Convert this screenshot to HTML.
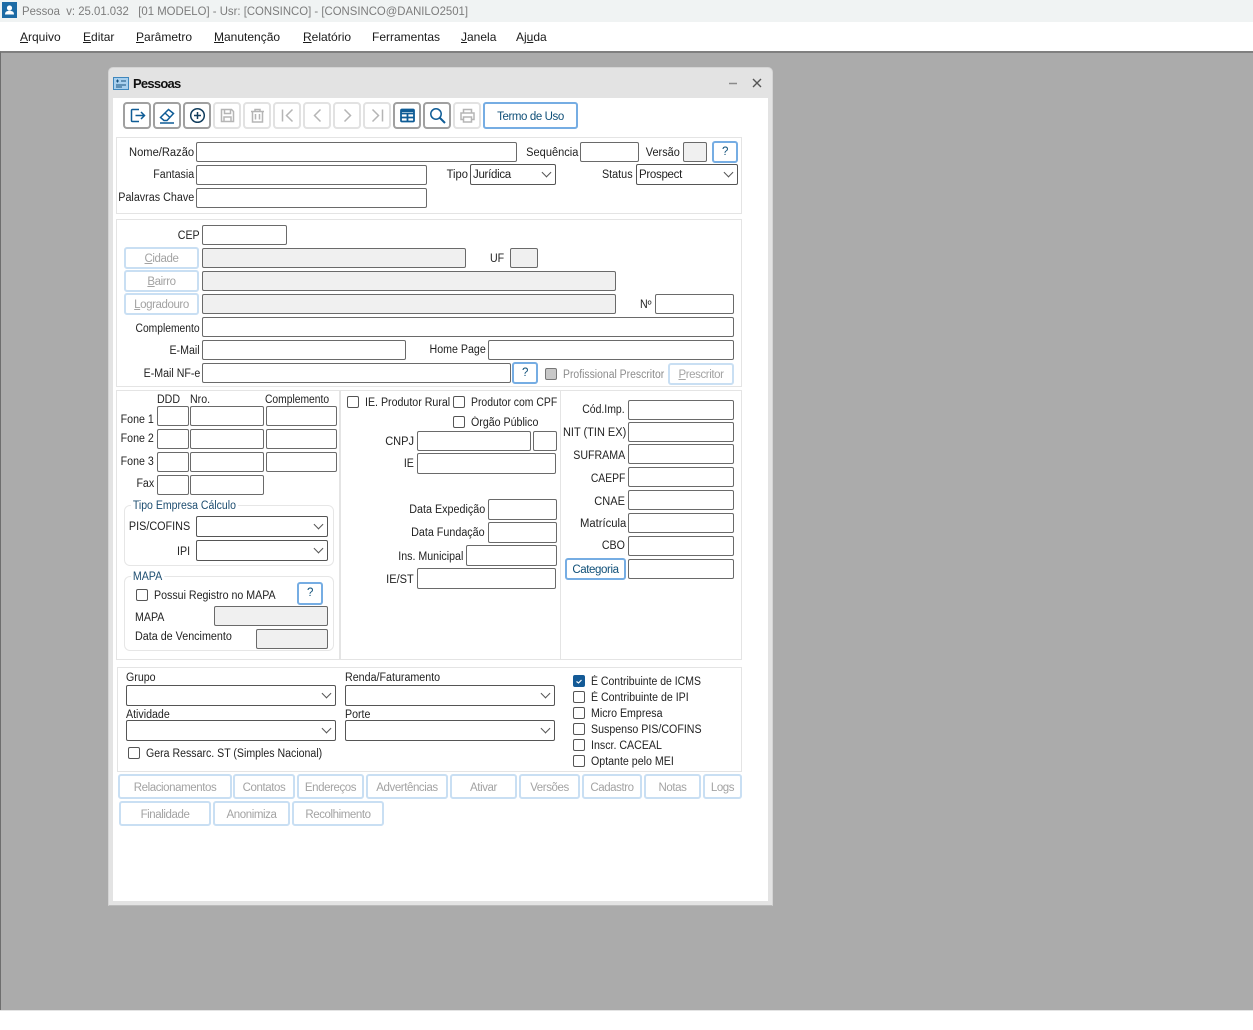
<!DOCTYPE html>
<html><head><meta charset="utf-8"><title>Pessoa</title>
<style>
html,body{margin:0;padding:0;width:1253px;height:1030px;overflow:hidden;background:#fff;font-family:"Liberation Sans",sans-serif;font-size:11.5px;color:#222}
div,span,svg{position:absolute;box-sizing:border-box}
u{text-decoration:underline}
.t{white-space:nowrap;line-height:14px;height:14px;margin-top:1px;transform:scaleX(.925);transform-origin:left center}
.r{white-space:nowrap;line-height:14px;height:14px;margin-top:1px;text-align:right;transform:scaleX(.925);transform-origin:right center}
.i{background:#fff;border:1px solid #6a6a6a;border-radius:2px;height:20px}
.d{background:#f0f0f0}
.s{background:#fff;border:1px solid #555;border-radius:2px;height:21px;line-height:20px;padding-left:2px;color:#222;letter-spacing:-.3px}
.s:after{content:"";position:absolute;right:5px;top:4px;width:6px;height:6px;border-right:1.5px solid #555;border-bottom:1.5px solid #555;transform:rotate(45deg)}
.g{border:1px solid #e4e4e4;background:#fff}
.fs{border:1px solid #e6e6e6;border-radius:6px;background:#fff}
.b{border:2px solid #c9dff3;border-radius:3px;background:#fff;color:#a3a3a3;text-align:center;line-height:24px;white-space:nowrap;letter-spacing:-.42px}
.q{border:2px solid #76ade3;border-radius:3px;background:#fff;color:#0f4f78;text-align:center;line-height:18px;letter-spacing:-.4px}
.c{width:12px;height:12px;border:1px solid #555;border-radius:2px;background:#fff}
.tb{width:28px;height:27px;border:2px solid #a0a0a0;border-radius:4px;background:#fff;top:102px}
.off{border-color:#e2e2e2}
.tb svg{left:2.500px;top:2px;width:19px;height:19px;fill:none;stroke:#0f5c96;stroke-width:1.5}
.off svg{stroke:#b5b5b5}
.m{top:29.500px;color:#1a1a1a;font-size:12px;line-height:14px;white-space:nowrap}
</style></head><body>

<div style="left:0;top:0;width:1253px;height:22px;background:#f0f3f3"></div>
<div style="left:2px;top:2px;width:15px;height:16px;background:#1d6ba5"></div>
<svg style="left:2px;top:2px" width="15" height="16"><circle cx="7.500" cy="6" r="2.600" fill="#fff"/><path d="M3 12.500c0-3 2-3.600 4.500-3.600s4.500.6 4.500 3.600z" fill="#fff"/></svg>
<div class="t" style="left:22px;top:4px;margin-top:0;color:#7c7c7c;font-size:12px;transform:scaleX(.947)">Pessoa&nbsp;&nbsp;v: 25.01.032&nbsp;&nbsp;&nbsp;[01 MODELO] - Usr: [CONSINCO] - [CONSINCO@DANILO2501]</div>
<div style="left:0;top:22px;width:1253px;height:29px;background:#fff"></div>
<div class="m" style="left:20px"><u>A</u>rquivo</div>
<div class="m" style="left:83px"><u>E</u>ditar</div>
<div class="m" style="left:136px"><u>P</u>arâmetro</div>
<div class="m" style="left:214px"><u>M</u>anutenção</div>
<div class="m" style="left:303px"><u>R</u>elatório</div>
<div class="m" style="left:372px">Ferramentas</div>
<div class="m" style="left:461px"><u>J</u>anela</div>
<div class="m" style="left:516px">Aj<u>u</u>da</div>

<div style="left:0;top:51px;width:1253px;height:959px;background:#ababab;border-top:2px solid #7f7f7f;border-left:1px solid #6e6e6e"></div>
<div style="left:0;top:1010px;width:1253px;height:1px;background:#e4e4e4"></div>

<div style="left:108px;top:67px;width:665px;height:839px;background:#e3e3e3;border-radius:5px 5px 0 0;border:1px solid #d4d4d4;border-bottom:1px solid #bbb"></div>
<div style="left:113px;top:98px;width:655px;height:803px;background:#fff"></div>
<svg style="left:113px;top:76px" width="17" height="15"><rect x=".5" y="1.500" width="15" height="12" fill="#a9d0ee" stroke="#3f87bd"/><path d="M3 5h3M4.500 3.500v3M8 5h5M3 9h10M3 11h6" stroke="#17527f" fill="none"/></svg>
<div class="t" style="left:133px;top:76px;font-weight:bold;font-size:13px;color:#111;transform:none;letter-spacing:-.75px">Pessoas</div>
<svg style="left:726px;top:76px" width="40" height="14"><path d="M3 7.500h8" stroke="#8a8a8a" stroke-width="1.500"/><path d="M27 3l8 8M35 3l-8 8" stroke="#555" stroke-width="1.400"/></svg>

<div class="tb" style="left:123px"><svg viewBox="0 0 19 19"><path d="M11 3.500H4.500a1 1 0 0 0-1 1v10a1 1 0 0 0 1 1H11M7.500 9.500h9M13 6l3.500 3.500L13 13"/></svg></div>
<div class="tb" style="left:153px"><svg viewBox="0 0 19 19"><path d="M2.500 11.500 10.500 3.500 15.500 7.500 9 14.500H6zM7 7l5 4.500M2 17h14"/></svg></div>
<div class="tb" style="left:183px"><svg viewBox="0 0 19 19" style="stroke:#123e5e"><circle cx="9.500" cy="9.500" r="6.800"/><path d="M9.500 6v7M6 9.500h7"/></svg></div>
<div class="tb off" style="left:213px"><svg viewBox="0 0 19 19"><path d="M3.500 3.500h10l2 2v10h-12zM6.500 3.500v4h6v-4M6 15.500v-4.500h7v4.500"/></svg></div>
<div class="tb off" style="left:243px"><svg viewBox="0 0 19 19"><path d="M3 5.500h13M7 5.500v-2h5v2M4.500 5.500v10.500h10v-10.500M7.500 8v5.500M11.500 8v5.500"/></svg></div>
<div class="tb off" style="left:273px"><svg viewBox="0 0 19 19"><path d="M4.500 3.500v12M14.500 3.500l-6 6 6 6"/></svg></div>
<div class="tb off" style="left:303px"><svg viewBox="0 0 19 19"><path d="M12.500 3.500l-6 6 6 6"/></svg></div>
<div class="tb off" style="left:333px"><svg viewBox="0 0 19 19"><path d="M6.500 3.500l6 6-6 6"/></svg></div>
<div class="tb off" style="left:363px"><svg viewBox="0 0 19 19"><path d="M14.500 3.500v12M4.500 3.500l6 6-6 6"/></svg></div>
<div class="tb" style="left:393px"><svg viewBox="0 0 19 19" style="stroke-width:1.800"><rect x="3" y="3.500" width="13" height="12" rx="1"/><path d="M3 7.500h13M3 11.500h13M9.500 7.500v8"/><path d="M3 4.800h13" stroke-width="2.500"/></svg></div>
<div class="tb" style="left:423px"><svg viewBox="0 0 19 19"><circle cx="8" cy="8" r="5.200"/><path d="M12 12l5 5" stroke-width="2"/></svg></div>
<div class="tb off" style="left:453px"><svg viewBox="0 0 19 19"><path d="M5.500 7V3.500h8V7M5 13.500H3v-6.500h13v6.500h-2M5.500 11h8v5h-8z"/></svg></div>
<div class="q" style="left:483px;top:102px;width:95px;height:27px;line-height:26px">Termo de Uso</div>

<!-- section 1 -->
<div class="g" style="left:116px;top:137px;width:626px;height:77px"></div>
<div class="r" style="right:1059px;top:145px;transform:scaleX(.97)">Nome/Razão</div>
<div class="i" style="left:196px;top:142px;width:321px"></div>
<div class="r" style="right:675px;top:145px;transform:scaleX(.96)">Sequência</div>
<div class="r" style="right:573px;top:145px;transform:scaleX(.95)" >Versão</div>
<div class="i" style="left:580px;top:142px;width:59px"></div>
<div class="i d" style="left:683px;top:142px;width:24px"></div>
<div class="q" style="left:712px;top:141px;width:26px;height:22px">?</div>
<div class="r" style="right:1059px;top:167px">Fantasia</div>
<div class="i" style="left:196px;top:165px;width:231px"></div>
<div class="r" style="right:785px;top:167px;transform:scaleX(.97)">Tipo</div>
<div class="s" style="left:470px;top:164px;width:86px">Jurídica</div>
<div class="r" style="right:620px;top:167px;transform:scaleX(.94)">Status</div>
<div class="s" style="left:636px;top:164px;width:102px">Prospect</div>
<div class="r" style="right:1059px;top:190px;transform:scaleX(.935)">Palavras Chave</div>
<div class="i" style="left:196px;top:188px;width:231px"></div>

<!-- section 2 -->
<div class="g" style="left:116px;top:219px;width:626px;height:168px"></div>
<div class="r" style="right:1053px;top:228px">CEP</div>
<div class="i" style="left:202px;top:225px;width:85px"></div>
<div class="b" style="left:124px;top:247px;width:75px;height:22px;line-height:20px"><u>C</u>idade</div>
<div class="i d" style="left:202px;top:248px;width:264px"></div>
<div class="t" style="left:490px;top:251px">UF</div>
<div class="i d" style="left:510px;top:248px;width:28px"></div>
<div class="b" style="left:124px;top:270px;width:75px;height:22px;line-height:20px"><u>B</u>airro</div>
<div class="i d" style="left:202px;top:271px;width:414px"></div>
<div class="b" style="left:124px;top:293px;width:75px;height:22px;line-height:20px"><u>L</u>ogradouro</div>
<div class="i d" style="left:202px;top:294px;width:414px"></div>
<div class="t" style="left:640px;top:297px">Nº</div>
<div class="i" style="left:655px;top:294px;width:79px"></div>
<div class="r" style="right:1053px;top:321px;transform:scaleX(.895)">Complemento</div>
<div class="i" style="left:202px;top:317px;width:532px"></div>
<div class="r" style="right:1053px;top:343px">E-Mail</div>
<div class="i" style="left:202px;top:340px;width:204px"></div>
<div class="r" style="right:767px;top:342px">Home Page</div>
<div class="i" style="left:488px;top:340px;width:246px"></div>
<div class="r" style="right:1053px;top:366px">E-Mail NF-e</div>
<div class="i" style="left:202px;top:363px;width:309px"></div>
<div class="q" style="left:512px;top:362px;width:26px;height:22px">?</div>
<div class="c" style="left:545px;top:368px;background:#c8c8c8;border-color:#777"></div>
<div class="t" style="left:563px;top:367px;color:#8c8c8c;transform:scaleX(.905)">Profissional Prescritor</div>
<div class="b" style="left:668px;top:363px;width:66px;height:22px;line-height:20px"><u>P</u>rescritor</div>

<!-- section 3 -->
<div class="g" style="left:116px;top:390px;width:626px;height:270px"></div>
<div style="left:339px;top:390px;width:2px;height:270px;background:#e4e4e4"></div>
<div style="left:560px;top:390px;width:1px;height:270px;background:#e4e4e4"></div>

<div class="t" style="left:157px;top:392px">DDD</div>
<div class="t" style="left:190px;top:392px">Nro.</div>
<div class="t" style="left:265px;top:392px;transform:scaleX(.895)">Complemento</div>
<div class="r" style="right:1099px;top:412px">Fone 1</div>
<div class="r" style="right:1099px;top:431px">Fone 2</div>
<div class="r" style="right:1099px;top:454px">Fone 3</div>
<div class="r" style="right:1099px;top:476px">Fax</div>
<div class="i" style="left:157px;top:406px;width:32px"></div><div class="i" style="left:190px;top:406px;width:74px"></div><div class="i" style="left:266px;top:406px;width:71px"></div>
<div class="i" style="left:157px;top:429px;width:32px"></div><div class="i" style="left:190px;top:429px;width:74px"></div><div class="i" style="left:266px;top:429px;width:71px"></div>
<div class="i" style="left:157px;top:452px;width:32px"></div><div class="i" style="left:190px;top:452px;width:74px"></div><div class="i" style="left:266px;top:452px;width:71px"></div>
<div class="i" style="left:157px;top:475px;width:32px"></div><div class="i" style="left:190px;top:475px;width:74px"></div>

<div class="fs" style="left:124px;top:505px;width:210px;height:61px"></div>
<div class="t" style="left:131px;top:498px;background:#fff;padding:0 2px;color:#1d4d70;transform:scaleX(.915)">Tipo Empresa Cálculo</div>
<div class="r" style="right:1063px;top:519px;transform:scaleX(.94)">PIS/COFINS</div>
<div class="s" style="left:196px;top:516px;width:132px"></div>
<div class="r" style="right:1063px;top:544px">IPI</div>
<div class="s" style="left:196px;top:540px;width:132px"></div>

<div class="fs" style="left:124px;top:576px;width:210px;height:75px"></div>
<div class="t" style="left:131px;top:569px;background:#fff;padding:0 2px;color:#1d4d70">MAPA</div>
<div class="c" style="left:136px;top:589px"></div>
<div class="t" style="left:154px;top:588px">Possui Registro no MAPA</div>
<div class="q" style="left:297px;top:582px;width:26px;height:23px">?</div>
<div class="t" style="left:135px;top:610px">MAPA</div>
<div class="i d" style="left:214px;top:606px;width:114px"></div>
<div class="t" style="left:135px;top:629px;transform:scaleX(.935)">Data de Vencimento</div>
<div class="i d" style="left:256px;top:629px;width:72px"></div>

<div class="c" style="left:347px;top:396px"></div>
<div class="t" style="left:365px;top:395px">IE. Produtor Rural</div>
<div class="c" style="left:453px;top:396px"></div>
<div class="t" style="left:471px;top:395px;transform:scaleX(.905)">Produtor com CPF</div>
<div class="c" style="left:453px;top:416px"></div>
<div class="t" style="left:471px;top:415px">Órgão Público</div>
<div class="r" style="right:839px;top:434px;transform:scaleX(.96)">CNPJ</div>
<div class="i" style="left:417px;top:431px;width:114px"></div>
<div class="i" style="left:533px;top:431px;width:24px"></div>
<div class="r" style="right:839px;top:456px">IE</div>
<div class="i" style="left:417px;top:453px;width:139px;height:21px"></div>
<div class="r" style="right:768px;top:502px;transform:scaleX(.935)">Data Expedição</div>
<div class="i" style="left:488px;top:499px;width:69px;height:21px"></div>
<div class="r" style="right:768px;top:525px;transform:scaleX(.935)">Data Fundação</div>
<div class="i" style="left:488px;top:522px;width:69px;height:21px"></div>
<div class="r" style="right:790px;top:549px">Ins. Municipal</div>
<div class="i" style="left:466px;top:545px;width:91px;height:21px"></div>
<div class="r" style="right:839px;top:572px;transform:scaleX(.96)">IE/ST</div>
<div class="i" style="left:417px;top:568px;width:139px;height:21px"></div>

<div class="r" style="right:628px;top:402px;transform:scaleX(.91)">Cód.Imp.</div>
<div class="i" style="left:628px;top:400px;width:106px"></div>
<div class="r" style="right:627px;top:425px;transform:scaleX(.955)">NIT (TIN EX)</div>
<div class="i" style="left:628px;top:422px;width:106px"></div>
<div class="r" style="right:628px;top:448px">SUFRAMA</div>
<div class="i" style="left:628px;top:444px;width:106px"></div>
<div class="r" style="right:628px;top:471px;transform:scaleX(.9)">CAEPF</div>
<div class="i" style="left:628px;top:467px;width:106px"></div>
<div class="r" style="right:628px;top:494px;transform:scaleX(.96)">CNAE</div>
<div class="i" style="left:628px;top:490px;width:106px"></div>
<div class="r" style="right:627px;top:516px;transform:scaleX(.98)">Matrícula</div>
<div class="i" style="left:628px;top:513px;width:106px"></div>
<div class="r" style="right:628px;top:538px">CBO</div>
<div class="i" style="left:628px;top:536px;width:106px"></div>
<div class="q" style="left:565px;top:558px;width:61px;height:22px;line-height:20px">Categoria</div>
<div class="i" style="left:628px;top:559px;width:106px"></div>

<!-- section 4 -->
<div class="g" style="left:117px;top:667px;width:625px;height:105px"></div>
<div class="t" style="left:126px;top:670px">Grupo</div>
<div class="s" style="left:126px;top:685px;width:210px"></div>
<div class="t" style="left:126px;top:707px">Atividade</div>
<div class="s" style="left:126px;top:720px;width:210px"></div>
<div class="t" style="left:345px;top:670px;transform:scaleX(.93)">Renda/Faturamento</div>
<div class="s" style="left:345px;top:685px;width:210px"></div>
<div class="t" style="left:345px;top:707px">Porte</div>
<div class="s" style="left:345px;top:720px;width:210px"></div>
<div class="c" style="left:128px;top:747px"></div>
<div class="t" style="left:146px;top:746px;transform:scaleX(.92)">Gera Ressarc. ST (Simples Nacional)</div>

<div class="c" style="left:573px;top:675px;background:#145a96;border-color:#145a96"></div>
<svg style="left:573px;top:675px" width="12" height="12"><path d="M3.500 6.500l2 1.500 3-3" stroke="#fff" stroke-width="1.200" fill="none"/></svg>
<div class="t" style="left:591px;top:674px;transform:scaleX(.91)">É Contribuinte de ICMS</div>
<div class="c" style="left:573px;top:691px"></div><div class="t" style="left:591px;top:690px;transform:scaleX(.92)">É Contribuinte de IPI</div>
<div class="c" style="left:573px;top:707px"></div><div class="t" style="left:591px;top:706px">Micro Empresa</div>
<div class="c" style="left:573px;top:723px"></div><div class="t" style="left:591px;top:722px">Suspenso PIS/COFINS</div>
<div class="c" style="left:573px;top:739px"></div><div class="t" style="left:591px;top:738px">Inscr. CACEAL</div>
<div class="c" style="left:573px;top:755px"></div><div class="t" style="left:591px;top:754px">Optante pelo MEI</div>

<div class="b" style="left:118px;top:774px;width:114px;height:25px">Relacionamentos</div>
<div class="b" style="left:233px;top:774px;width:62px;height:25px">Contatos</div>
<div class="b" style="left:297px;top:774px;width:67px;height:25px">Endereços</div>
<div class="b" style="left:366px;top:774px;width:82px;height:25px">Advertências</div>
<div class="b" style="left:450px;top:774px;width:67px;height:25px">Ativar</div>
<div class="b" style="left:519px;top:774px;width:61px;height:25px">Versões</div>
<div class="b" style="left:582px;top:774px;width:60px;height:25px">Cadastro</div>
<div class="b" style="left:644px;top:774px;width:57px;height:25px">Notas</div>
<div class="b" style="left:703px;top:774px;width:39px;height:25px">Logs</div>
<div class="b" style="left:119px;top:801px;width:92px;height:25px">Finalidade</div>
<div class="b" style="left:213px;top:801px;width:77px;height:25px">Anonimiza</div>
<div class="b" style="left:292px;top:801px;width:92px;height:25px">Recolhimento</div>
</body></html>
